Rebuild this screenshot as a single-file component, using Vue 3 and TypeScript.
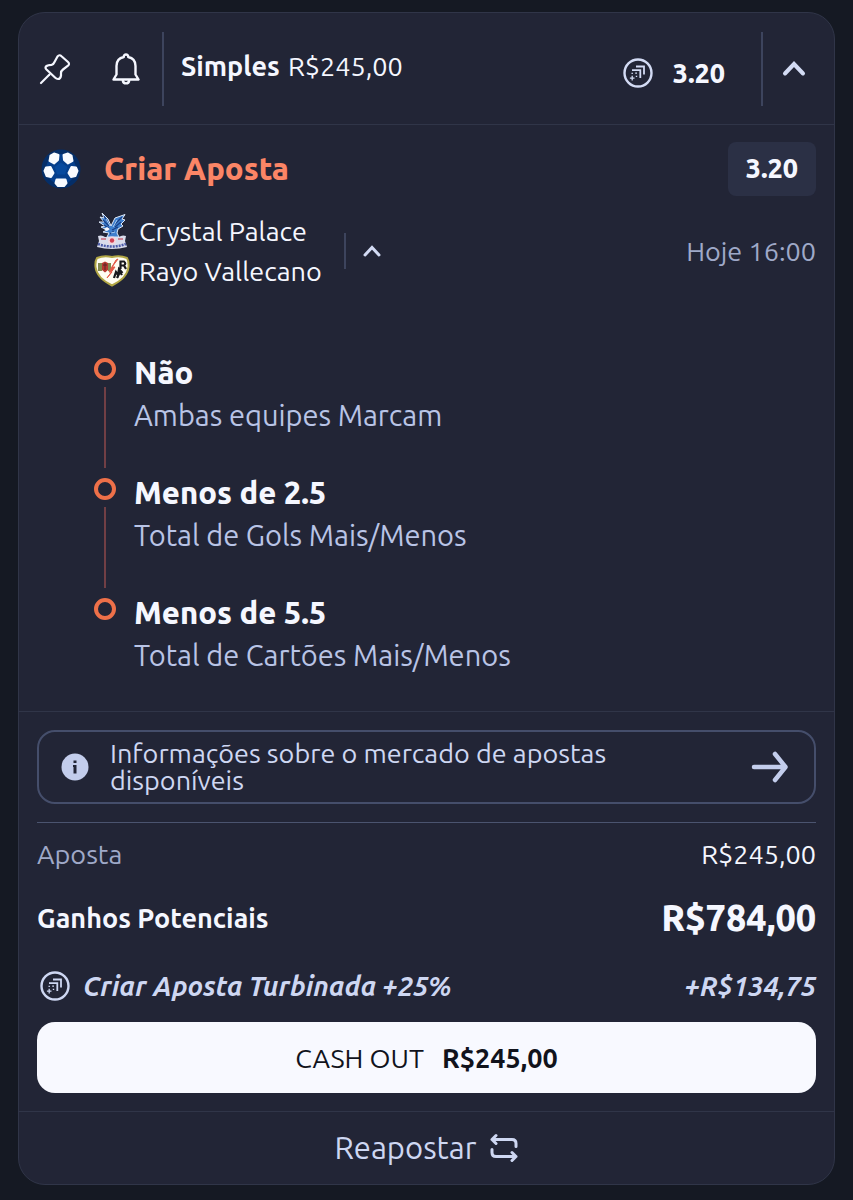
<script setup lang="ts">
interface Leg {
  pick: string
  market: string
}

const legs: Leg[] = [
  { pick: 'Não', market: 'Ambas equipes Marcam' },
  { pick: 'Menos de 2.5', market: 'Total de Gols Mais/Menos' },
  { pick: 'Menos de 5.5', market: 'Total de Cartões Mais/Menos' },
]
</script>

<template>
  <main class="page">
    <article class="card">
      <header class="head">
        <button class="icon-btn" type="button" aria-label="Fixar">
          <svg width="32" height="32" viewBox="0 0 32 32" fill="none" stroke="currentColor" stroke-width="2.200" stroke-linecap="round" stroke-linejoin="round">
            <path d="M2 30 10.500 21.500" />
            <path d="M18.500 3.500Q20.500 1.200 22.500 3.200L29 9Q31 11 29 12.700L24 16.500Q22 18 22 20V22.500Q21.500 26 19 26Q17.500 26 16 24.500L7.500 16.500Q5.500 14.500 7.500 13Q9 12 12.500 11.800Q14.500 11.500 15.500 9Z" />
          </svg>
        </button>
        <button class="icon-btn bell" type="button" aria-label="Notificações">
          <svg width="28" height="32" viewBox="0 0 28 32" fill="none" stroke="currentColor" stroke-width="2.400" stroke-linejoin="round" stroke-linecap="round">
            <path d="M11.800 4C11.500 .6 16.500 .6 16.200 4C21 5 23.500 8.800 23.500 13V21.500L26.500 26.500H1.500L4.500 21.500V13C4.500 8.800 7 5 11.800 4Z" />
            <path d="M10.800 27.500C11.300 31.300 16.700 31.300 17.200 27.500" />
          </svg>
        </button>
        <span class="rule"></span>
        <h1 class="stake"><strong>Simples</strong> R$245,00</h1>
        <div class="head-odds">
          <svg class="boost" width="30" height="30" viewBox="0 0 30 30" fill="none" stroke="currentColor" aria-hidden="true">
            <circle cx="15" cy="15" r="13.500" stroke-width="2.400" />
            <path d="M13 8.500H21V16.500M9 12.200H17.300V20" stroke-width="1.800" />
            <path d="M9.200 17.800V22.400M6.900 20.100H11.500M12.200 15.200H14M12.800 18.400H14.200M8.500 15.300H9.900" stroke-width="1.300" />
          </svg>
          <strong>3.20</strong>
        </div>
        <span class="rule"></span>
        <button class="icon-btn fold" type="button" aria-label="Recolher aposta">
          <svg width="26" height="18" viewBox="0 0 26 18" fill="none" stroke="currentColor" stroke-width="4" stroke-linecap="round" stroke-linejoin="miter">
            <path d="M4 13.500 13 4 22 13.500" />
          </svg>
        </button>
      </header>

      <section class="bet">
        <div class="bet-title">
          <svg class="ball" width="40" height="40" viewBox="0 0 40 40" aria-hidden="true">
            <circle cx="20" cy="20" r="19.500" fill="#042e68" />
            <circle cx="20" cy="20" r="15" fill="#053f8c" />
            <path d="M20 13.500 26.500 18 24 25.500H16L13.500 18Z" fill="#074a9e" />
            <g fill="#f8fbff" stroke="#f8fbff" stroke-width="2" stroke-linejoin="round">
              <path d="M9.500 6.500 13 4.500 17.500 6 17 11 13 14.500 8.500 12Z" />
              <path d="M30.500 6.500 27 4.500 22.500 6 23 11 27 14.500 31.500 12Z" />
              <path d="M5 18.500 9.500 18 12.500 24 10 28 5.500 27 3.500 22Z" />
              <path d="M35 18.500 30.500 18 27.500 24 30 28 34.500 27 36.500 22Z" />
              <path d="M15.500 30.500H24.500L25.500 34 23 37H17L14.500 34Z" />
            </g>
          </svg>
          <h2>Criar Aposta</h2>
          <strong class="chip">3.20</strong>
        </div>

        <div class="match">
          <ul class="teams">
            <li>
              <svg width="36" height="38" viewBox="0 0 36 38" aria-hidden="true">
                <path d="M4 24Q8 22.500 11 25H25Q28 22.500 32 24L31 29 33 35Q18 39 3 35L5 29Z" fill="#d9dceb" />
                <path d="M8 1 14 7 17 14 21 6 31 2.500 28 7 31 8 27 12 29 14 24 17 23 21 25 25H13L15 21 9 20 13 18 7 15 11 14 5 10 10 10 6 5 10 6Z" fill="#3f7fcd" stroke="#dfe9f8" stroke-width="1" stroke-linejoin="round" />
                <path d="M10 4 15 12M9 8 15 14M10 13 16 17M20 13 28 5M21 15 27 10M18 18 24 15M16 22 20 19" stroke="#173f86" stroke-width="1.300" />
                <path d="M12 7 16 14M23 8 19 15M17 21 21 20" stroke="#a9cef4" stroke-width="1" />
                <path d="M10 17 13 15 16 17 13 19Z" fill="#f5f8ff" />
                <circle cx="18" cy="28.500" r="4" fill="#f2d6de" />
                <circle cx="18" cy="28.500" r="2.200" fill="#cf4053" />
                <path d="M4 32Q18 37 32 32" fill="none" stroke="#4b5aa8" stroke-width="2.500" stroke-dasharray="2 1" />
                <path d="M7 27H12M24 27H29" stroke="#c86578" stroke-width="1.500" />
              </svg>
              <span>Crystal Palace</span>
            </li>
            <li>
              <svg width="36" height="32" viewBox="0 0 36 32" aria-hidden="true">
                <path d="M3 3Q10 0 18 2Q26 0 33 3Q35 6 34.500 12C33.500 22 25 27 18 30.500C11 27 2.500 22 1.500 12Q1 6 3 3Z" fill="#fffdf3" stroke="#b2a745" stroke-width="2" />
                <path d="M4 8H8V16H4ZM14 8H17V16H14Z" fill="#83894f" />
                <path d="M8 8 11 6.500 14 8V15L11 17.500 8 15Z" fill="#b73831" />
                <path d="M9 10H13M11 8V15" stroke="#572928" />
                <path d="M24 4 18 12H21L13 23 18 17H15L22 5Z" fill="#e45a48" stroke="#e45a48" />
                <path d="M26.500 14V6.500H30Q32.500 8.500 30 10.500H26.500M30 10.500 32 14M20 23 22 17 24 20 25 14 28.500 18M23 23 26 17 28 20" fill="none" stroke="#18191d" stroke-width="2.200" />
              </svg>
              <span>Rayo Vallecano</span>
            </li>
          </ul>
          <span class="rule short"></span>
          <button class="icon-btn toggle" type="button" aria-label="Recolher seleções">
            <svg width="22" height="16" viewBox="0 0 22 16" fill="none" stroke="currentColor" stroke-width="3" stroke-linecap="round">
              <path d="M4 12 11 4.500 18 12" />
            </svg>
          </button>
          <time class="kickoff">Hoje 16:00</time>
        </div>

        <ol class="legs">
          <li v-for="leg in legs" :key="leg.pick" class="leg">
            <span class="marker"></span>
            <div>
              <h3>{{ leg.pick }}</h3>
              <p>{{ leg.market }}</p>
            </div>
          </li>
        </ol>
      </section>

      <section class="summary">
        <button class="info" type="button">
          <svg width="28" height="28" viewBox="0 0 28 28" aria-hidden="true">
            <circle cx="14" cy="14" r="13.500" fill="#c3cdec" />
            <path d="M12.500 7.500H15.500V10H12.500ZM12 12H15.500V20.500H12.500V14H12Z" fill="#222536" />
          </svg>
          <span>Informações sobre o mercado de apostas disponíveis</span>
          <svg class="arrow" width="38" height="34" viewBox="0 0 38 34" fill="none" stroke="currentColor" stroke-width="4.500" stroke-linecap="round" stroke-linejoin="round" aria-hidden="true">
            <path d="M4 17H35M25 4 35.500 17 25 30" />
          </svg>
        </button>

        <dl class="totals">
          <div class="line">
            <dt class="muted">Aposta</dt>
            <dd>R$245,00</dd>
          </div>
          <div class="line win">
            <dt>Ganhos Potenciais</dt>
            <dd>R$784,00</dd>
          </div>
          <div class="line bonus">
            <dt>
              <svg width="30" height="30" viewBox="0 0 30 30" fill="none" stroke="currentColor" aria-hidden="true">
                <circle cx="15" cy="15" r="13.500" stroke-width="2.400" />
                <path d="M13 8.500H21V16.500M9 12.200H17.300V20" stroke-width="1.800" />
                <path d="M9.200 17.800V22.400M6.900 20.100H11.500M12.200 15.200H14M12.800 18.400H14.200M8.500 15.300H9.900" stroke-width="1.300" />
              </svg>
              <span>Criar Aposta Turbinada +25%</span>
            </dt>
            <dd>+R$134,75</dd>
          </div>
        </dl>

        <button class="cashout" type="button">
          <span>CASH OUT</span>
          <strong>R$245,00</strong>
        </button>
      </section>

      <footer class="foot">
        <button class="rebet" type="button">
          <span>Reapostar</span>
          <svg width="28" height="30" viewBox="0 0 28 30" fill="none" stroke="currentColor" stroke-width="3" stroke-linecap="round" stroke-linejoin="round" aria-hidden="true">
            <path d="M6 2.500 2 6.500 6 10.500M2 6.500H22Q26 6.500 26 10.500V13.500" />
            <path d="M22 19.500 26 23.500 22 27.500M26 23.500H6Q2 23.500 2 19.500V16.500" />
          </svg>
        </button>
      </footer>
    </article>
  </main>
</template>

<style>
body {
  margin: 0;
  background: #151923;
}
</style>

<style scoped>
.page {
  box-sizing: border-box;
  min-height: 100vh;
  padding: 12px 18px 15px;
  background: #151923;
  color: #f5f7ff;
  font-family: Ubuntu, "Noto Sans", "Open Sans", sans-serif;
  font-size: 27px;
  line-height: 38px;
}

h1,
h2,
h3,
p,
ul,
ol,
dl,
dd {
  margin: 0;
  padding: 0;
  list-style: none;
}

strong {
  font-weight: 800;
}

button {
  border: 0;
  padding: 0;
  background: none;
  color: inherit;
  font: inherit;
  cursor: pointer;
}

svg {
  display: block;
  flex: none;
}

.card {
  border: 1px solid #303548;
  border-radius: 27px;
  background: #222536;
}

.head {
  display: flex;
  align-items: center;
  height: 111px;
  padding: 0 27px 0 20px;
}

.bell {
  margin: 0 22px 0 41px;
}

.rule {
  flex: none;
  width: 2px;
  height: 74px;
  background: #3d445d;
}

.stake {
  flex: 1;
  margin: 0 0 6px 17px;
  font-size: 27px;
  font-weight: 400;
}

.stake strong {
  font-weight: 700;
  margin-right: 2px;
}

.head-odds {
  display: flex;
  align-items: center;
  gap: 20px;
  margin: 8px 36px 0 0;
}

.boost,
.fold,
.toggle {
  color: #d3dbf4;
}

.fold {
  margin-left: 18px;
}

.bet {
  border-top: 1px solid #303548;
  padding: 17px 18px 34px;
}

.bet-title {
  display: flex;
  align-items: center;
}

.bet-title h2 {
  flex: 1;
  margin-left: 23px;
  color: #fb8566;
  font-size: 31px;
  font-weight: 800;
}

.ball {
  margin-left: 4px;
}

.chip {
  padding: 7px 18px 9px;
  border-radius: 8px;
  background: #2b3045;
}

.match {
  display: flex;
  align-items: center;
  margin: 15px 0 62px 57px;
}

.teams li {
  display: flex;
  align-items: center;
  gap: 9px;
  height: 40px;
}

.rule.short {
  height: 36px;
  margin: 0 15px 0 22px;
}

.kickoff {
  margin-left: auto;
  color: #9fa9c8;
}

.leg {
  display: grid;
  grid-template-columns: 22px 1fr;
  column-gap: 18px;
  margin-left: 57px;
  padding-bottom: 36px;
}

.leg:last-child {
  padding-bottom: 0;
}

.leg h3 {
  font-size: 31px;
  font-weight: 800;
  line-height: 40px;
}

.leg p {
  color: #b9c4e6;
  font-size: 29px;
  font-weight: 450;
  line-height: 44px;
}

.marker {
  display: flex;
  flex-direction: column;
  align-items: center;
  gap: 7px;
  margin: 5px 0 -31px;
}

.marker::before {
  content: "";
  box-sizing: border-box;
  width: 22px;
  height: 22px;
  border: 4px solid #ee7049;
  border-radius: 50%;
}

.marker::after {
  content: "";
  flex: 1;
  width: 2px;
  background: #713f45;
}

.leg:last-child .marker {
  margin-bottom: 0;
}

.leg:last-child .marker::after {
  display: none;
}

.summary {
  border-top: 1px solid #303548;
  padding: 18px;
}

.info {
  display: flex;
  align-items: center;
  box-sizing: border-box;
  width: 100%;
  min-height: 74px;
  padding: 8px 26px 8px 22px;
  border: 2px solid #454e6b;
  border-radius: 18px;
  color: #ced7f2;
  line-height: 27px;
  text-align: left;
}

.info span {
  max-width: 540px;
  margin: 0 auto 0 21px;
}

.arrow {
  color: #c3cdec;
}

.totals {
  margin-top: 18px;
  border-top: 1px solid #4b546f;
}

.line {
  display: flex;
  align-items: center;
  justify-content: space-between;
  height: 62px;
}

.line.bonus {
  height: 72px;
  color: #ced7f2;
  font-style: italic;
  font-weight: 700;
}

.bonus dt {
  display: flex;
  align-items: center;
  gap: 13px;
  margin-left: 3px;
}

.muted {
  color: #9fa9c8;
}

.line.win {
  height: 65px;
  font-weight: 700;
}

.win dd {
  font-size: 36px;
  font-weight: 800;
}

.cashout {
  display: flex;
  align-items: center;
  justify-content: center;
  gap: 18px;
  width: 100%;
  min-height: 71px;
  border-radius: 18px;
  background: #f8f9ff;
  color: #11131c;
}

.cashout strong {
  font-weight: 600;
}

.foot {
  border-top: 1px solid #303548;
}

.rebet {
  display: flex;
  align-items: center;
  justify-content: center;
  gap: 14px;
  width: 100%;
  height: 72px;
  color: #ced7f2;
  font-size: 31px;
  font-weight: 450;
}
</style>
